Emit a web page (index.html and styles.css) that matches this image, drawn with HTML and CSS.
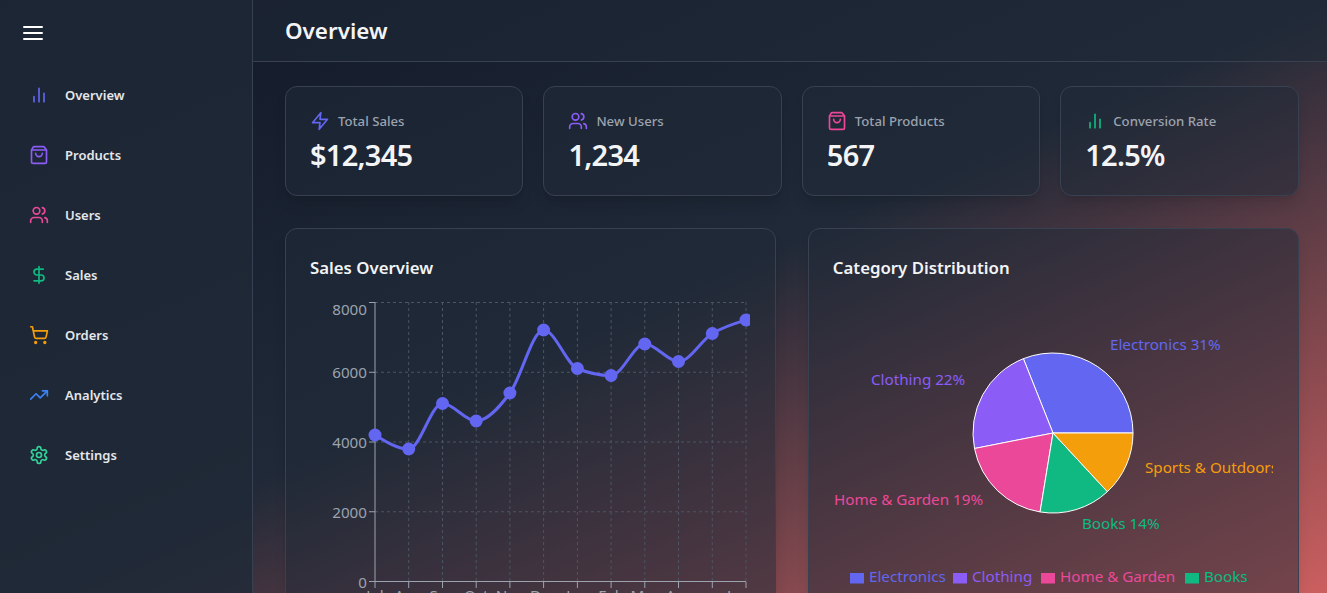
FILE: index.html
```html
<!DOCTYPE html>
<html lang="en">
<head>
	<meta charset="UTF-8">
	<title>Overview</title>
	<link rel="stylesheet" href="styles.css">
</head>
<body>
	<div class="app">
		<aside class="sidebar">
			<button class="menu-btn" type="button" aria-label="Menu">
				<svg class="icon-menu" viewBox="0 0 24 24"><path d="M3 6h18M3 12h18M3 18h18"/></svg>
			</button>
			<nav class="nav">
				<a class="nav-item">
					<svg class="icon c-indigo" viewBox="0 0 24 24"><path d="M18 20V10M12 20V4M6 20v-6"/></svg>
					<span>Overview</span>
				</a>
				<a class="nav-item">
					<svg class="icon c-violet" viewBox="0 0 24 24"><path d="M3.4 5.467a2 2 0 0 0-.4 1.2V20a2 2 0 0 0 2 2h14a2 2 0 0 0 2-2V6.667a2 2 0 0 0-.4-1.2l-2.4-3.2A2 2 0 0 0 17.6 2H6.4a2 2 0 0 0-1.6.8z"/><path d="M3.103 6.034h17.794"/><path d="M16 10a4 4 0 0 1-8 0"/></svg>
					<span>Products</span>
				</a>
				<a class="nav-item">
					<svg class="icon c-pink" viewBox="0 0 24 24"><path d="M16 21v-2a4 4 0 0 0-4-4H6a4 4 0 0 0-4 4v2"/><circle cx="9" cy="7" r="4"/><path d="M22 21v-2a4 4 0 0 0-3-3.87"/><path d="M16 3.13a4 4 0 0 1 0 7.75"/></svg>
					<span>Users</span>
				</a>
				<a class="nav-item">
					<svg class="icon c-green" viewBox="0 0 24 24"><path d="M12 2v20"/><path d="M17 5H9.5a3.5 3.5 0 0 0 0 7h5a3.5 3.5 0 0 1 0 7H6"/></svg>
					<span>Sales</span>
				</a>
				<a class="nav-item">
					<svg class="icon c-amber" viewBox="0 0 24 24"><circle cx="8" cy="21" r="1"/><circle cx="19" cy="21" r="1"/><path d="M2.05 2.05h2l2.66 12.42a2 2 0 0 0 2 1.58h9.78a2 2 0 0 0 1.95-1.57l1.65-7.43H5.12"/></svg>
					<span>Orders</span>
				</a>
				<a class="nav-item">
					<svg class="icon c-blue" viewBox="0 0 24 24"><path d="M22 7l-8.5 8.5-5-5L2 17"/><path d="M16 7h6v6"/></svg>
					<span>Analytics</span>
				</a>
				<a class="nav-item">
					<svg class="icon c-teal" viewBox="0 0 24 24"><path d="M12.22 2h-.44a2 2 0 0 0-2 2v.18a2 2 0 0 1-1 1.73l-.43.25a2 2 0 0 1-2 0l-.15-.08a2 2 0 0 0-2.73.73l-.22.38a2 2 0 0 0 .73 2.73l.15.1a2 2 0 0 1 1 1.72v.51a2 2 0 0 1-1 1.74l-.15.09a2 2 0 0 0-.73 2.73l.22.38a2 2 0 0 0 2.73.73l.15-.08a2 2 0 0 1 2 0l.43.25a2 2 0 0 1 1 1.73V20a2 2 0 0 0 2 2h.44a2 2 0 0 0 2-2v-.18a2 2 0 0 1 1-1.73l.43-.25a2 2 0 0 1 2 0l.15.08a2 2 0 0 0 2.73-.73l.22-.39a2 2 0 0 0-.73-2.73l-.15-.08a2 2 0 0 1-1-1.74v-.5a2 2 0 0 1 1-1.74l.15-.09a2 2 0 0 0 .73-2.73l-.22-.38a2 2 0 0 0-2.73-.73l-.15.08a2 2 0 0 1-2 0l-.43-.25a2 2 0 0 1-1-1.73V4a2 2 0 0 0-2-2z"/><circle cx="12" cy="12" r="3"/></svg>
					<span>Settings</span>
				</a>
			</nav>
		</aside>

		<div class="main">
			<header class="topbar">
				<h1>Overview</h1>
			</header>
			<main class="content">
				<section class="stats">
					<div class="card stat">
						<div class="stat-label">
							<svg class="icon c-indigo" viewBox="0 0 24 24"><path d="M13 2 3 14h9l-1 8 10-12h-9l1-8z"/></svg>
							<span>Total Sales</span>
						</div>
						<div class="stat-value">$12,345</div>
					</div>
					<div class="card stat">
						<div class="stat-label">
							<svg class="icon c-violet" viewBox="0 0 24 24"><path d="M16 21v-2a4 4 0 0 0-4-4H6a4 4 0 0 0-4 4v2"/><circle cx="9" cy="7" r="4"/><path d="M22 21v-2a4 4 0 0 0-3-3.87"/><path d="M16 3.13a4 4 0 0 1 0 7.75"/></svg>
							<span>New Users</span>
						</div>
						<div class="stat-value">1,234</div>
					</div>
					<div class="card stat">
						<div class="stat-label">
							<svg class="icon c-pink" viewBox="0 0 24 24"><path d="M3.4 5.467a2 2 0 0 0-.4 1.2V20a2 2 0 0 0 2 2h14a2 2 0 0 0 2-2V6.667a2 2 0 0 0-.4-1.2l-2.4-3.2A2 2 0 0 0 17.6 2H6.4a2 2 0 0 0-1.6.8z"/><path d="M3.103 6.034h17.794"/><path d="M16 10a4 4 0 0 1-8 0"/></svg>
							<span>Total Products</span>
						</div>
						<div class="stat-value">567</div>
					</div>
					<div class="card stat">
						<div class="stat-label">
							<svg class="icon c-green" viewBox="0 0 24 24"><path d="M18 20V10M12 20V4M6 20v-6"/></svg>
							<span>Conversion Rate</span>
						</div>
						<div class="stat-value">12.5%</div>
					</div>
				</section>

				<section class="charts">
					<div class="card chart-card">
						<h2>Sales Overview</h2>
						<svg class="chart" viewBox="310 292 440 320">
							<g class="grid">
								<path d="M375 302.5H746M375 372.25H746M375 442H746M375 511.75H746"/>
								<path d="M408.7 302V582M442.5 302V582M476.2 302V582M509.9 302V582M543.6 302V582M577.4 302V582M611.1 302V582M644.8 302V582M678.5 302V582M712.3 302V582M746 302V582"/>
							</g>
							<path class="axis" d="M375 302V581.5H746"/>
							<path class="axis" d="M369 302.5H375M369 372.25H375M369 442H375M369 511.75H375M369 581.5H375"/>
							<path class="axis" d="M375 582v6M408.7 582v6M442.5 582v6M476.2 582v6M509.9 582v6M543.6 582v6M577.4 582v6M611.1 582v6M644.8 582v6M678.5 582v6M712.3 582v6M746 582v6"/>
							<g class="ticks-y">
								<text x="367" y="315">8000</text>
								<text x="367" y="378">6000</text>
								<text x="367" y="448">4000</text>
								<text x="367" y="518">2000</text>
								<text x="367" y="588">0</text>
							</g>
							<g class="ticks-x">
								<text x="375" y="601">Jul</text>
								<text x="408.7" y="601">Aug</text>
								<text x="442.5" y="601">Sep</text>
								<text x="476.2" y="601">Oct</text>
								<text x="509.9" y="601">Nov</text>
								<text x="543.6" y="601">Dec</text>
								<text x="577.4" y="601">Jan</text>
								<text x="611.1" y="601">Feb</text>
								<text x="644.8" y="601">Mar</text>
								<text x="678.5" y="601">Apr</text>
								<text class="tick-last" x="750" y="601">Jun</text>
							</g>
							<path class="line" d="M375 435C386.2 442 397.5 449 408.7 449C420 449 431.2 403.5 442.5 403.5C453.7 403.5 464.9 421 476.2 421C487.4 421 498.7 408.2 509.9 393C521.2 377.8 532.4 330 543.6 330C554.9 330 566.1 363.8 577.4 368.5C588.6 373.2 599.9 375.5 611.1 375.5C622.3 375.5 633.6 344 644.8 344C656.1 344 667.3 361.5 678.5 361.5C689.8 361.5 701 340.4 712.3 333.5C723.5 326.6 734.8 323.3 746 320"/>
							<g class="dots">
								<circle cx="375" cy="435" r="6.5"/>
								<circle cx="408.7" cy="449" r="6.5"/>
								<circle cx="442.5" cy="403.5" r="6.5"/>
								<circle cx="476.2" cy="421" r="6.5"/>
								<circle cx="509.9" cy="393" r="6.5"/>
								<circle cx="543.6" cy="330" r="6.5"/>
								<circle cx="577.4" cy="368.5" r="6.5"/>
								<circle cx="611.1" cy="375.5" r="6.5"/>
								<circle cx="644.8" cy="344" r="6.5"/>
								<circle cx="678.5" cy="361.5" r="6.5"/>
								<circle cx="712.3" cy="333.5" r="6.5"/>
								<circle cx="746" cy="320" r="6.5"/>
							</g>
						</svg>
					</div>
					<div class="card chart-card">
						<h2>Category Distribution</h2>
						<svg class="chart" viewBox="833 292 440 320">
							<g class="slices">
								<path fill="#6366f1" d="M1053 433L1133 433A80 80 0 0 0 1023.39 358.68Z"/>
								<path fill="#8b5cf6" d="M1053 433L1023.39 358.68A80 80 0 0 0 974.51 448.5Z"/>
								<path fill="#ec4899" d="M1053 433L974.51 448.5A80 80 0 0 0 1040.06 511.95Z"/>
								<path fill="#10b981" d="M1053 433L1040.06 511.95A80 80 0 0 0 1107.38 491.68Z"/>
								<path fill="#f59e0b" d="M1053 433L1107.38 491.68A80 80 0 0 0 1133 433Z"/>
							</g>
							<g class="pie-labels">
								<text x="1110" y="350" fill="#6366f1">Electronics 31%</text>
								<text x="871" y="385" fill="#8b5cf6">Clothing 22%</text>
								<text x="834" y="505" fill="#ec4899">Home &amp; Garden 19%</text>
								<text x="1082" y="529" fill="#10b981">Books 14%</text>
								<text x="1145" y="473" fill="#f59e0b">Sports &amp; Outdoors 13%</text>
							</g>
							<g class="legend">
								<rect x="850" y="573" width="14" height="10.5" fill="#6366f1"/>
								<text x="869" y="582" fill="#6366f1">Electronics</text>
								<rect x="953" y="573" width="14" height="10.5" fill="#8b5cf6"/>
								<text x="972" y="582" fill="#8b5cf6">Clothing</text>
								<rect x="1041" y="573" width="14" height="10.5" fill="#ec4899"/>
								<text x="1060" y="582" fill="#ec4899">Home &amp; Garden</text>
								<rect x="1185" y="573" width="14" height="10.5" fill="#10b981"/>
								<text x="1204" y="582" fill="#10b981">Books</text>
							</g>
						</svg>
					</div>
				</section>
			</main>
		</div>
	</div>
</body>
</html>
```

FILE: styles.css
```css
* {
	margin: 0;
	padding: 0;
	box-sizing: border-box;
}
html, body {
	height: 100%;
	overflow: hidden;
}
body {
	font-family: "Noto Sans", "Open Sans", sans-serif;
	color: #f3f4f6;
	background: linear-gradient(to bottom right, #111827 0%, #1f2937 50%, #cc5f5f 100%);
}
.app {
	display: flex;
	height: 100%;
}
.sidebar {
	flex: 0 0 253px;
	padding: 21px 16px 0;
	background: rgba(31, 41, 55, 0.8);
	border-right: 1px solid #374151;
}
.menu-btn {
	display: block;
	width: 24px;
	height: 24px;
	margin-left: 5px;
	background: none;
	border: 0;
}
.icon-menu {
	display: block;
	width: 24px;
	height: 24px;
	fill: none;
	stroke: #fff;
	stroke-width: 2;
	stroke-linecap: round;
}
.nav {
	display: flex;
	flex-direction: column;
	gap: 8px;
	margin-top: 24px;
}
.nav-item {
	display: flex;
	align-items: center;
	gap: 16px;
	height: 52px;
	padding-left: 13px;
	font-size: 13px;
	font-weight: 600;
	color: #e5e7eb;
}
.icon {
	flex: none;
	width: 20px;
	height: 20px;
	fill: none;
	stroke: currentColor;
	stroke-width: 2;
	stroke-linecap: round;
	stroke-linejoin: round;
}
.c-indigo { color: #6366f1; }
.c-violet { color: #8b5cf6; }
.c-pink { color: #ec4899; }
.c-green { color: #10b981; }
.c-amber { color: #f59e0b; }
.c-blue { color: #3b82f6; }
.c-teal { color: #34d399; }
.main {
	flex: 1;
	min-width: 0;
}
.topbar {
	height: 62px;
	padding: 0 32px 1px;
	display: flex;
	align-items: center;
	background: rgba(31, 41, 55, 0.5);
	border-bottom: 1px solid #374151;
}
.topbar h1 {
	font-size: 22.4px;
	font-weight: 600;
	color: #f3f4f6;
}
.content {
	padding: 24px 28.4px 0 32px;
}
.stats {
	display: grid;
	grid-template-columns: repeat(4, 1fr);
	gap: 20px;
}
.card {
	background: rgba(31, 41, 55, 0.5);
	border: 1px solid #374151;
	border-radius: 12px;
	box-shadow: 0 10px 15px -3px rgba(0, 0, 0, 0.1), 0 4px 6px -4px rgba(0, 0, 0, 0.1);
}
.stat {
	height: 110px;
	padding: 24px;
}
.stat-label {
	display: flex;
	align-items: center;
	gap: 8px;
	height: 20px;
	font-size: 13.2px;
	font-weight: 500;
	color: #9ca3af;
}
.stat-value {
	margin-top: 4px;
	font-size: 29px;
	letter-spacing: -0.75px;
	line-height: 40px;
	font-weight: 600;
	color: #f3f4f6;
}
.charts {
	display: grid;
	grid-template-columns: repeat(2, 1fr);
	gap: 32px;
	margin-top: 32px;
}
.chart-card {
	height: 420px;
	padding: 24px;
}
.chart-card h2 {
	height: 30px;
	line-height: 30px;
	margin-bottom: 9px;
	font-size: 16.8px;
	font-weight: 600;
	color: #f3f4f6;
}
.chart {
	display: block;
	width: 440px;
	height: 320px;
	font-size: 15.2px;
}
.grid path {
	fill: none;
	stroke: #4b5563;
	stroke-dasharray: 3 3;
}
.axis {
	fill: none;
	stroke: #9ca3af;
}
.ticks-y text {
	fill: #9ca3af;
	text-anchor: end;
}
.ticks-x text {
	fill: #9ca3af;
	text-anchor: middle;
}
.ticks-x .tick-last {
	text-anchor: end;
}
.line {
	fill: none;
	stroke: #6366f1;
	stroke-width: 3;
}
.dots circle {
	fill: #6366f1;
}
.slices path {
	stroke: #fff;
}
```
